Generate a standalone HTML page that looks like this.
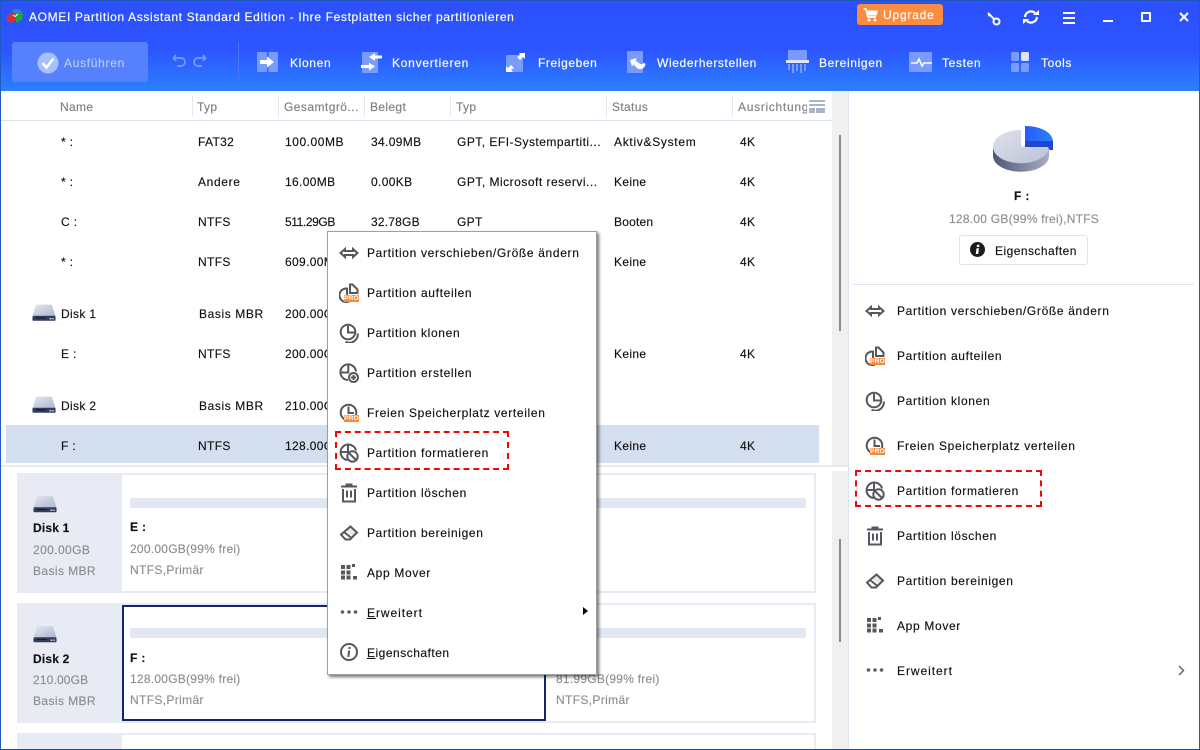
<!DOCTYPE html>
<html><head><meta charset="utf-8">
<style>
*{box-sizing:border-box}
html,body{margin:0;padding:0;width:1200px;height:750px;overflow:hidden;background:#fff}
body{position:relative;font-family:"Liberation Sans",sans-serif;font-size:12px;color:#111}
.t{position:absolute;white-space:nowrap;line-height:16px;height:16px;font-size:12px;letter-spacing:.35px;-webkit-text-stroke:.15px currentColor}
.m{letter-spacing:.66px}
.r{position:absolute}
.w{color:#fff}
.g{color:#8d8d94;letter-spacing:.25px}
.h{color:#7c7f86}
.b{font-weight:bold}
svg{position:absolute;overflow:visible}
.ic{fill:none;stroke:#55575c;stroke-width:2}
u{text-decoration:underline}
.pro{position:absolute;width:15px;height:7px;background:#f58a3c;color:#fff;font-size:6.500px;line-height:7px;text-align:center;font-weight:bold;letter-spacing:.2px}
.sep{position:absolute;top:95px;width:1px;height:22px;background:#e6e9ef}
</style></head><body>
<svg width="0" height="0" style="position:absolute"><defs>
<linearGradient id="dg" x1="0" y1="0" x2="1" y2="1"><stop offset="0" stop-color="#e3e6f0"/><stop offset="1" stop-color="#aeb6cd"/></linearGradient>
<symbol id="move" viewBox="0 0 20 20"><path class="ic" d="M6 6 1.500 10 6 14V12H14v2L18.500 10 14 6V8H6z"/></symbol>
<symbol id="split" viewBox="0 0 20 20"><path class="ic" d="M8 5.500A6.800 6.800 0 1 0 14 13H8z"/><path class="ic" d="M11 1.500h2.500l5 5v3.500H11z"/></symbol>
<symbol id="clone" viewBox="0 0 20 20"><circle class="ic" cx="9" cy="9" r="7.300"/><path class="ic" d="M9 3V9.500h6.500"/><path class="ic" d="M18.800 10.500A8.500 8.500 0 0 1 6.500 18.800"/></symbol>
<symbol id="create" viewBox="0 0 20 20"><path class="ic" d="M9 17A7.800 7.800 0 1 1 17 8.500"/><path class="ic" d="M9.300 2V9.500H2"/><circle class="ic" cx="14.500" cy="14.500" r="4.500"/><path class="ic" d="M12 14.500h5M14.500 12v5"/></symbol>
<symbol id="dist" viewBox="0 0 20 20"><circle class="ic" cx="9.500" cy="9.500" r="7.800"/><path class="ic" d="M9.500 3.500v6.500H15"/></symbol>
<symbol id="fmt" viewBox="0 0 20 20"><path class="ic" d="M8.500 17A7.800 7.800 0 1 1 17 7.500"/><path class="ic" d="M9 2V9H2.500"/><circle class="ic" cx="13.500" cy="13.500" r="5.200"/><path class="ic" d="M9.800 9.800 17 17"/></symbol>
<symbol id="trash" viewBox="0 0 20 20"><path class="ic" d="M2 3.500h16M7.500 3V1.500h5V3M4 6v12.500h12V6"/><path class="ic" d="M8 7.500v7M12 7.500v7"/></symbol>
<symbol id="erase" viewBox="0 0 20 20"><path class="ic" d="M2 11.500 11.500 3.500 18 9.500 11 16.500H6.500z"/><path fill="#55575c" d="M11.500 3.500 18 9.500 14 13.500 7 7.500z" opacity=".15"/><path class="ic" d="M5 9l7.500 6"/></symbol>
<symbol id="app" viewBox="0 0 20 20"><g fill="#55575c"><rect x="2" y="2" width="4" height="4"/><rect x="7.500" y="2" width="4" height="4"/><rect x="13" y="1" width="3" height="3"/><rect x="2" y="7.500" width="4" height="4"/><rect x="7.500" y="7.500" width="4" height="4"/><rect x="2" y="12.500" width="4" height="4"/><rect x="7.500" y="12.500" width="4" height="4"/><rect x="14" y="13" width="4" height="3.500"/></g></symbol>
<symbol id="more" viewBox="0 0 20 20"><g fill="#5c5e63"><circle cx="3.500" cy="10" r="1.800"/><circle cx="10" cy="10" r="1.800"/><circle cx="16.500" cy="10" r="1.800"/></g></symbol>
<symbol id="info" viewBox="0 0 20 20"><circle class="ic" cx="10" cy="10" r="8"/><path fill="#55575c" d="M9 8.500h2.200L10.300 15H8.400zM9.500 5h2.200l-.3 2H9.300z"/></symbol>
<symbol id="disk" viewBox="0 0 26 18"><path fill="url(#dg)" d="M5.500 .5h15Q21.500 .5 22 2L25.500 13H.5L4 2Q4.500 .5 5.500 .5z"/><rect x=".5" y="12.500" width="25" height="5.500" rx="1.200" fill="#333c5a"/><rect x="4" y="14.300" width="11" height="1" fill="#0e1326"/><rect x="19" y="15" width="2" height="1.500" fill="#cfe0ff"/><rect x="22" y="15" width="1.500" height="1.500" fill="#cfe0ff"/></symbol>
</defs></svg>

<!-- top bar -->
<div class="r" style="left:0;top:0;width:1200px;height:91px;background:linear-gradient(#2c50fb 0,#2d55ff 55%,#2b80ff 100%)"></div>
<div class="r" style="left:0;top:0;width:1200px;height:1px;background:#1d55b8"></div>
<svg style="left:7px;top:9px" width="16" height="15" viewBox="0 0 16 15"><path fill="#1fa24a" d="M5 1 12 0l4 5-1 6-6 3V6z"/><path fill="#d8322c" d="M0 6l9-2v7l-6 3-3-3z"/><path fill="#2b86d8" d="M5 1l7-1 3 3-6 1z"/><path fill="none" stroke="#fff" stroke-width="1" d="M6 6l2 1.500L11 5"/></svg>
<div class="t w" style="left:29px;top:9px;letter-spacing:.65px">AOMEI Partition Assistant Standard Edition - Ihre Festplatten sicher partitionieren</div>
<div class="r" style="left:857px;top:4px;width:86px;height:21px;background:#fd8c41;border-radius:3px"></div>
<svg style="left:863px;top:8px" width="16" height="14" viewBox="0 0 16 14"><path fill="none" stroke="#fff" stroke-width="1.800" d="M.5 1H3l2 8h8"/><path fill="#fff" d="M4 2.500h11l-1.500 5H5.500z"/><circle cx="6" cy="12" r="1.500" fill="#fff"/><circle cx="12" cy="12" r="1.500" fill="#fff"/></svg>
<div class="t w" style="left:883px;top:7px;letter-spacing:.8px">Upgrade</div>
<svg style="left:986px;top:10px" width="16" height="18" viewBox="0 0 16 18" fill="none" stroke="#fff" stroke-width="2"><circle cx="10.500" cy="11.500" r="3"/><path d="M8 9 2 3M2.500 6l2-2"/></svg>
<svg style="left:1023px;top:9px" width="16" height="16" viewBox="0 0 16 16" fill="none" stroke="#fff" stroke-width="2.200"><path d="M2 8a6 6 0 0 1 10-4M14 8a6 6 0 0 1-10 4"/><path fill="#fff" stroke="none" d="M10 6h6V1zM6 10H0v5z"/></svg>
<svg style="left:1063px;top:12px" width="12" height="11" fill="#fff"><rect width="12" height="2"/><rect y="5" width="12" height="2"/><rect y="10" width="12" height="2"/></svg>
<div class="r" style="left:1103px;top:20px;width:10px;height:2px;background:#fff"></div>
<div class="r" style="left:1141px;top:12px;width:10px;height:10px;border:2px solid #fff;border-radius:1px"></div>
<svg style="left:1178px;top:11px" width="12" height="12" fill="none" stroke="#fff" stroke-width="2"><path d="M2 2l8 8M10 2l-8 8"/></svg>

<!-- toolbar -->
<div class="r" style="left:12px;top:42px;width:136px;height:40px;border-radius:3px;background:#5681fd"></div>
<svg style="left:37px;top:52px" width="22" height="22" viewBox="0 0 22 22"><circle cx="11" cy="11" r="10.500" fill="#a7bffb"/><path fill="none" stroke="#fff" stroke-width="2.500" d="M5.500 11l4 4.500L16.500 6.500"/></svg>
<div class="t" style="left:64px;top:55px;color:#b6c8fb;letter-spacing:.7px">Ausführen</div>
<svg style="left:172px;top:54px" width="36" height="14" viewBox="0 0 36 14" fill="none" stroke="#7e9bfb" stroke-width="1.700"><path d="M4 1 1.500 4 4 7M2 4h7a4 4 0 0 1 0 8H5"/><path d="M31 1l2.500 3L31 7M33 4h-7a4 4 0 0 0 0 8h4"/></svg>
<div class="r" style="left:238px;top:42px;width:1px;height:40px;background:#4a74fb"></div>

<svg style="left:257px;top:52px" width="21" height="20"><rect width="10" height="20" rx="1" fill="#789bfd"/><rect x="11.500" width="9.500" height="20" rx="1" fill="#789bfd"/><path fill="#fff" d="M3 8h7V4.500l7 5.500-7 5.500V12H3z"/></svg>
<div class="t w" style="left:290px;top:55px;letter-spacing:.65px">Klonen</div>
<svg style="left:361px;top:51px" width="22" height="22"><rect x="1" y="1" width="16" height="21" rx="1" fill="#789bfd"/><path fill="#fff" d="M8 6l6-4v2.500h7v3h-7V10zM14 15.500l-6-4V14H0v3h8v2.500z"/></svg>
<div class="t w" style="left:392px;top:55px;letter-spacing:.75px">Konvertieren</div>
<svg style="left:506px;top:53px" width="20" height="19"><rect y="2" width="17" height="17" rx="1" fill="#789bfd"/><path fill="#fff" d="M13 0h6v6l-2-2-3 3-3-3 3-2zM0 13l2 2 3-3 3 3-3 2 2 2H0z"/></svg>
<div class="t w" style="left:538px;top:55px;letter-spacing:.6px">Freigeben</div>
<svg style="left:627px;top:51px" width="19" height="22"><rect width="16" height="22" rx="1" fill="#789bfd"/><path fill="#fff" d="M3 9l7-2-1.500 2.500 4 3c1.500 1 3 1 4-.5l2 .5c0 4-4 7-8 5l-4-4-1.500 2z"/></svg>
<div class="t w" style="left:657px;top:55px;letter-spacing:.62px">Wiederherstellen</div>
<svg style="left:786px;top:50px" width="23" height="23"><rect x="2" width="19" height="10" rx="1" fill="#789bfd"/><rect y="10" width="23" height="3" fill="#dfe7ff"/><g fill="#789bfd"><rect x="2" y="14" width="2" height="6"/><rect x="6" y="14" width="2" height="9"/><rect x="10" y="14" width="2" height="7"/><rect x="14" y="14" width="2" height="9"/><rect x="18" y="14" width="2" height="7"/></g></svg>
<div class="t w" style="left:819px;top:55px;letter-spacing:.65px">Bereinigen</div>
<svg style="left:909px;top:52px" width="25" height="20"><rect width="23" height="20" rx="1" fill="#789bfd"/><path fill="none" stroke="#fff" stroke-width="1.600" d="M2 11h6l2-4 3 7 2-3h8"/></svg>
<div class="t w" style="left:942px;top:55px;letter-spacing:.65px">Testen</div>
<svg style="left:1011px;top:52px" width="18" height="20"><rect width="8" height="9" rx="1.500" fill="#789bfd"/><rect x="10" width="8" height="9" rx="1.500" fill="#dbe4ff"/><rect y="11" width="8" height="9" rx="1.500" fill="#789bfd"/><rect x="10" y="11" width="8" height="9" rx="1.500" fill="#789bfd"/></svg>
<div class="t w" style="left:1041px;top:55px;letter-spacing:.6px">Tools</div>

<!-- table header -->
<div class="t h" style="left:60px;top:99px">Name</div>
<div class="sep" style="left:192px"></div>
<div class="t h" style="left:197px;top:99px">Typ</div>
<div class="sep" style="left:278px"></div>
<div class="t h" style="left:284px;top:99px;letter-spacing:.45px">Gesamtgrö...</div>
<div class="sep" style="left:364px"></div>
<div class="t h" style="left:370px;top:99px">Belegt</div>
<div class="sep" style="left:450px"></div>
<div class="t h" style="left:456px;top:99px">Typ</div>
<div class="sep" style="left:606px"></div>
<div class="t h" style="left:612px;top:99px">Status</div>
<div class="sep" style="left:732px"></div>
<div class="r" style="left:738px;top:99px;width:69px;height:16px;overflow:hidden"><div class="t h" style="left:0;top:0;letter-spacing:.7px">Ausrichtung</div></div>
<svg style="left:809px;top:100px" width="16" height="13" fill="#a8b4c8"><rect width="16" height="2"/><rect y="4" width="16" height="2"/><rect y="8" width="6" height="5"/><rect x="7" y="8" width="9" height="5"/></svg>
<div class="r" style="left:1px;top:120px;width:831px;height:1px;background:#dbe1ec"></div>

<!-- selected row -->
<div class="r" style="left:6px;top:425px;width:813px;height:38px;background:#d3dfef"></div>
<!-- table rows -->
<div class="t" style="left:61px;top:134px">* :</div><div class="t" style="left:198px;top:134px">FAT32</div><div class="t" style="left:285px;top:134px;letter-spacing:.55px">100.00MB</div><div class="t" style="left:371px;top:134px">34.09MB</div><div class="t" style="left:457px;top:134px;letter-spacing:.48px">GPT, EFI-Systempartiti...</div><div class="t" style="left:614px;top:134px;letter-spacing:.7px">Aktiv&amp;System</div><div class="t" style="left:740px;top:134px">4K</div>
<div class="t" style="left:61px;top:174px">* :</div><div class="t" style="left:198px;top:174px;letter-spacing:.65px">Andere</div><div class="t" style="left:285px;top:174px">16.00MB</div><div class="t" style="left:371px;top:174px">0.00KB</div><div class="t" style="left:457px;top:174px;letter-spacing:.5px">GPT, Microsoft reservi...</div><div class="t" style="left:614px;top:174px">Keine</div><div class="t" style="left:740px;top:174px">4K</div>
<div class="t" style="left:61px;top:214px">C :</div><div class="t" style="left:198px;top:214px">NTFS</div><div class="t" style="left:285px;top:214px;letter-spacing:-.4px">511.29GB</div><div class="t" style="left:371px;top:214px;letter-spacing:.2px">32.78GB</div><div class="t" style="left:457px;top:214px">GPT</div><div class="t" style="left:614px;top:214px;letter-spacing:.2px">Booten</div><div class="t" style="left:740px;top:214px">4K</div>
<div class="t" style="left:61px;top:254px">* :</div><div class="t" style="left:198px;top:254px">NTFS</div><div class="t" style="left:285px;top:254px">609.00MB</div><div class="t" style="left:614px;top:254px">Keine</div><div class="t" style="left:740px;top:254px">4K</div>
<svg style="left:32px;top:304px" width="24" height="17"><use href="#disk" width="24" height="17"/></svg>
<div class="t" style="left:61px;top:306px">Disk 1</div><div class="t" style="left:199px;top:306px;letter-spacing:.6px">Basis MBR</div><div class="t" style="left:285px;top:306px">200.00GB</div>
<div class="t" style="left:61px;top:346px">E :</div><div class="t" style="left:198px;top:346px">NTFS</div><div class="t" style="left:285px;top:346px">200.00GB</div><div class="t" style="left:614px;top:346px">Keine</div><div class="t" style="left:740px;top:346px">4K</div>
<svg style="left:32px;top:396px" width="24" height="17"><use href="#disk" width="24" height="17"/></svg>
<div class="t" style="left:61px;top:398px">Disk 2</div><div class="t" style="left:199px;top:398px;letter-spacing:.6px">Basis MBR</div><div class="t" style="left:285px;top:398px">210.00GB</div>
<div class="t" style="left:61px;top:438px">F :</div><div class="t" style="left:198px;top:438px">NTFS</div><div class="t" style="left:285px;top:438px">128.00GB</div><div class="t" style="left:614px;top:438px">Keine</div><div class="t" style="left:740px;top:438px">4K</div>

<!-- scrollbars -->
<div class="r" style="left:832px;top:91px;width:16px;height:374px;background:#f0f0f0"></div>
<div class="r" style="left:839px;top:135px;width:2px;height:196px;background:#8a8a8a"></div>
<div class="r" style="left:1px;top:465px;width:847px;height:2px;background:#e6ebf3"></div>
<div class="r" style="left:832px;top:471px;width:16px;height:279px;background:#f0f0f0"></div>
<div class="r" style="left:839px;top:539px;width:2px;height:103px;background:#8a8a8a"></div>

<!-- disk cards -->
<div class="r" style="left:17px;top:473px;width:799px;height:120px;border:2px solid #e8ebf3;background:#fff"></div>
<div class="r" style="left:17px;top:473px;width:105px;height:120px;background:#e8ebf3"></div>
<div class="r" style="left:130px;top:498px;width:676px;height:10px;background:#e1e8f3;border-radius:2px"></div>
<svg style="left:33px;top:495px" width="24" height="18"><use href="#disk" width="24" height="18"/></svg>
<div class="t b" style="left:33px;top:520px;color:#111;letter-spacing:.2px">Disk 1</div>
<div class="t g" style="left:33px;top:542px;letter-spacing:.4px">200.00GB</div>
<div class="t g" style="left:33px;top:563px;letter-spacing:.4px">Basis MBR</div>
<div class="t b" style="left:130px;top:519px">E :</div>
<div class="t g" style="left:130px;top:541px">200.00GB(99% frei)</div>
<div class="t g" style="left:130px;top:562px;letter-spacing:.35px">NTFS,Primär</div>

<div class="r" style="left:17px;top:603px;width:799px;height:120px;border:2px solid #e8ebf3;background:#fff"></div>
<div class="r" style="left:17px;top:603px;width:105px;height:120px;background:#e8ebf3"></div>
<div class="r" style="left:122px;top:605px;width:424px;height:116px;border:2px solid #14246e;background:#fff"></div>
<div class="r" style="left:130px;top:628px;width:400px;height:10px;background:#e1e8f3;border-radius:2px"></div>
<div class="r" style="left:556px;top:628px;width:250px;height:10px;background:#e1e8f3;border-radius:2px"></div>
<svg style="left:33px;top:625px" width="24" height="18"><use href="#disk" width="24" height="18"/></svg>
<div class="t b" style="left:33px;top:651px;letter-spacing:.2px">Disk 2</div>
<div class="t g" style="left:33px;top:672px;letter-spacing:.15px">210.00GB</div>
<div class="t g" style="left:33px;top:693px;letter-spacing:.4px">Basis MBR</div>
<div class="t b" style="left:130px;top:650px">F :</div>
<div class="t g" style="left:130px;top:671px">128.00GB(99% frei)</div>
<div class="t g" style="left:130px;top:692px;letter-spacing:.35px">NTFS,Primär</div>
<div class="t g" style="left:556px;top:671px">81.99GB(99% frei)</div>
<div class="t g" style="left:556px;top:692px;letter-spacing:.35px">NTFS,Primär</div>

<div class="r" style="left:17px;top:733px;width:799px;height:20px;border:2px solid #e8ebf3;background:#fff"></div>
<div class="r" style="left:17px;top:733px;width:105px;height:20px;background:#e8ebf3"></div>

<!-- context menu -->
<div class="r" style="left:327px;top:231px;width:270px;height:444px;background:#fff;border:1px solid #a0a0a0;box-shadow:2px 2px 3px rgba(0,0,0,.55)"></div>
<svg style="left:339px;top:243px" width="20" height="20"><use href="#move" width="20" height="20"/></svg>
<div class="t m" style="left:367px;top:245px">Partition verschieben/Größe ändern</div>
<svg style="left:339px;top:283px" width="20" height="20"><use href="#split" width="20" height="20"/></svg>
<div class="pro" style="left:344px;top:295px">PRO</div>
<div class="t m" style="left:367px;top:285px">Partition aufteilen</div>
<svg style="left:339px;top:323px" width="20" height="20"><use href="#clone" width="20" height="20"/></svg>
<div class="t m" style="left:367px;top:325px">Partition klonen</div>
<svg style="left:339px;top:363px" width="20" height="20"><use href="#create" width="20" height="20"/></svg>
<div class="t m" style="left:367px;top:365px">Partition erstellen</div>
<svg style="left:339px;top:403px" width="20" height="20"><use href="#dist" width="20" height="20"/></svg>
<div class="pro" style="left:344px;top:415px">PRO</div>
<div class="t m" style="left:367px;top:405px">Freien Speicherplatz verteilen</div>
<svg style="left:339px;top:443px" width="20" height="20"><use href="#fmt" width="20" height="20"/></svg>
<div class="t m" style="left:367px;top:445px">Partition formatieren</div>
<div class="r" style="left:335px;top:431px;width:174px;height:39px;border:2.500px dashed #f00802"></div>
<svg style="left:339px;top:483px" width="20" height="20"><use href="#trash" width="20" height="20"/></svg>
<div class="t m" style="left:367px;top:485px">Partition löschen</div>
<svg style="left:339px;top:523px" width="20" height="20"><use href="#erase" width="20" height="20"/></svg>
<div class="t m" style="left:367px;top:525px">Partition bereinigen</div>
<svg style="left:339px;top:563px" width="20" height="20"><use href="#app" width="20" height="20"/></svg>
<div class="t m" style="left:367px;top:565px">App Mover</div>
<svg style="left:339px;top:602px" width="20" height="20"><use href="#more" width="20" height="20"/></svg>
<div class="t" style="left:367px;top:605px;letter-spacing:.95px"><u>E</u>rweitert</div>
<svg style="left:583px;top:607px" width="5" height="8" fill="#000"><path d="M0 0l5 4-5 4z"/></svg>
<svg style="left:339px;top:642px" width="20" height="20"><use href="#info" width="20" height="20"/></svg>
<div class="t" style="left:367px;top:645px;letter-spacing:.5px"><u>E</u>igenschaften</div>

<!-- right panel -->
<div class="r" style="left:848px;top:91px;width:1px;height:659px;background:#dfe5f0"></div>
<svg style="left:993px;top:126px" width="60" height="48" viewBox="0 0 60 48">
<defs><linearGradient id="p1" x1="0" y1="0" x2="1" y2="1"><stop offset="0" stop-color="#dfe2ec"/><stop offset="1" stop-color="#bac2d6"/></linearGradient>
<linearGradient id="p2" x1="0" y1="0" x2="1" y2="0"><stop offset="0" stop-color="#4e5876"/><stop offset="1" stop-color="#a6adc3"/></linearGradient>
<linearGradient id="p3" x1="0" y1="0" x2="1" y2="0"><stop offset="0" stop-color="#2a5afc"/><stop offset="1" stop-color="#2b82fb"/></linearGradient></defs>
<path fill="url(#p2)" d="M0 20.700v9c0 9.100 12.700 16 28 16s28-6.900 28-16v-9z"/>
<path fill="url(#p1)" d="M28 4C12.700 4 0 11.400 0 20.700S12.700 37.200 28 37.200 56 30 56 20.700H28z"/>
<path fill="url(#p3)" d="M32 0c15 0 27 6 28 15H32z"/>
<path fill="#1f46cc" d="M32 15H60V24H56.500L55 21H32z"/>
</svg>
<div class="t b" style="left:1014px;top:188px">F :</div>
<div class="t g" style="left:949px;top:211px">128.00 GB(99% frei),NTFS</div>
<div class="r" style="left:959px;top:235px;width:129px;height:30px;border:1px solid #dfe3ec;border-radius:3px;background:#fff"></div>
<svg style="left:970px;top:242px" width="15" height="15" viewBox="0 0 15 15"><circle cx="7.500" cy="7.500" r="7.500" fill="#1c1c20"/><path fill="#fff" d="M6.500 6.300h2.500l-.8 5.700H5.800zM7 2.800h2.500L9.200 5H6.700z"/></svg>
<div class="t" style="left:995px;top:243px;letter-spacing:.45px">Eigenschaften</div>
<div class="r" style="left:853px;top:284px;width:341px;height:1px;background:#e1e6f0"></div>

<svg style="left:865px;top:301px" width="20" height="20"><use href="#move" width="20" height="20"/></svg>
<div class="t m" style="left:897px;top:303px">Partition verschieben/Größe ändern</div>
<svg style="left:865px;top:346px" width="20" height="20"><use href="#split" width="20" height="20"/></svg>
<div class="pro" style="left:870px;top:358px">PRO</div>
<div class="t m" style="left:897px;top:348px">Partition aufteilen</div>
<svg style="left:865px;top:391px" width="20" height="20"><use href="#clone" width="20" height="20"/></svg>
<div class="t m" style="left:897px;top:393px">Partition klonen</div>
<svg style="left:865px;top:436px" width="20" height="20"><use href="#dist" width="20" height="20"/></svg>
<div class="pro" style="left:870px;top:448px">PRO</div>
<div class="t m" style="left:897px;top:438px">Freien Speicherplatz verteilen</div>
<svg style="left:865px;top:481px" width="20" height="20"><use href="#fmt" width="20" height="20"/></svg>
<div class="t m" style="left:897px;top:483px">Partition formatieren</div>
<div class="r" style="left:855px;top:470px;width:187px;height:37px;border:2.500px dashed #f00802"></div>
<svg style="left:865px;top:526px" width="20" height="20"><use href="#trash" width="20" height="20"/></svg>
<div class="t m" style="left:897px;top:528px">Partition löschen</div>
<svg style="left:865px;top:571px" width="20" height="20"><use href="#erase" width="20" height="20"/></svg>
<div class="t m" style="left:897px;top:573px">Partition bereinigen</div>
<svg style="left:865px;top:616px" width="20" height="20"><use href="#app" width="20" height="20"/></svg>
<div class="t m" style="left:897px;top:618px">App Mover</div>
<svg style="left:865px;top:660px" width="20" height="20"><use href="#more" width="20" height="20"/></svg>
<div class="t" style="left:897px;top:663px;letter-spacing:.95px">Erweitert</div>
<svg style="left:1178px;top:665px" width="7" height="11" fill="none" stroke="#666" stroke-width="1.500"><path d="M1 1l4.500 4.500L1 10"/></svg>

<!-- window border -->
<div class="r" style="left:0;top:0;width:1px;height:750px;background:#1d5bc0"></div>
<div class="r" style="left:1199px;top:0;width:1px;height:750px;background:#1d5bc0"></div>
<div class="r" style="left:0;top:749px;width:1200px;height:1px;background:#1d4f9a"></div>
</body></html>
